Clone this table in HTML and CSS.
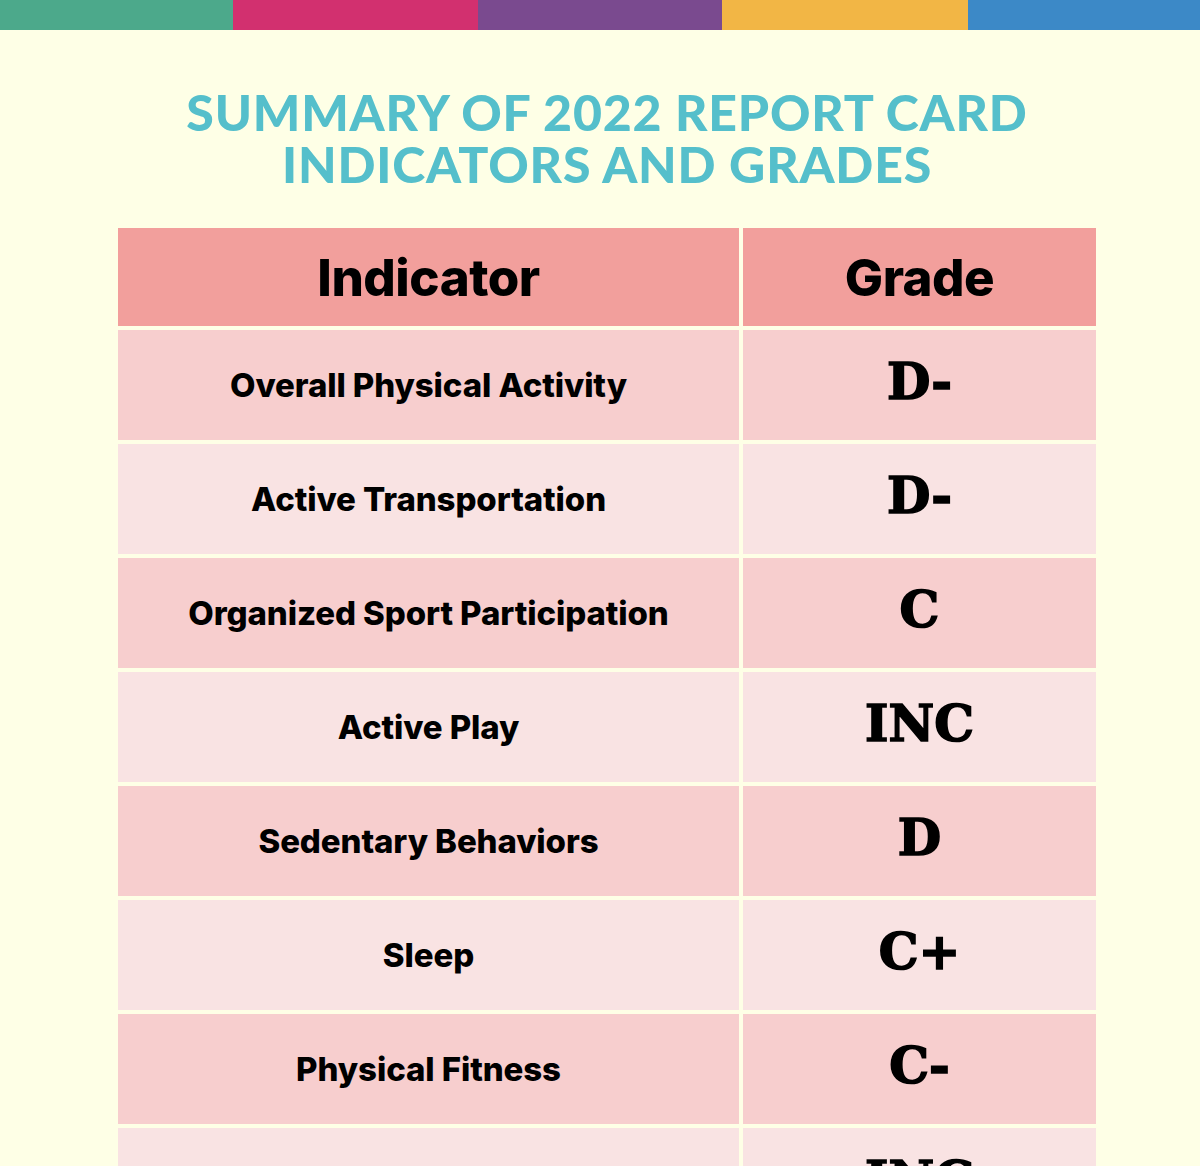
FILE: index.html
```html
<!DOCTYPE html>
<html lang="en">
<head>
<meta charset="utf-8">
<title>Summary of 2022 Report Card</title>
<link rel="stylesheet" href="styles.css">
</head>
<body>
<div class="topbar">
  <div class="seg seg-green"></div>
  <div class="seg seg-pink"></div>
  <div class="seg seg-purple"></div>
  <div class="seg seg-yellow"></div>
  <div class="seg seg-blue"></div>
</div>
<main class="page">
  <h1 class="title"><span class="line">SUMMARY OF 2022 REPORT CARD</span><span class="line">INDICATORS AND GRADES</span></h1>
  <div class="grid">
    <div class="cell head">Indicator</div>
    <div class="cell head">Grade</div>

    <div class="cell ind odd">Overall Physical Activity</div>
    <div class="cell grade odd">D-</div>

    <div class="cell ind even">Active Transportation</div>
    <div class="cell grade even">D-</div>

    <div class="cell ind odd">Organized Sport Participation</div>
    <div class="cell grade odd">C</div>

    <div class="cell ind even">Active Play</div>
    <div class="cell grade even">INC</div>

    <div class="cell ind odd">Sedentary Behaviors</div>
    <div class="cell grade odd">D</div>

    <div class="cell ind even">Sleep</div>
    <div class="cell grade even">C+</div>

    <div class="cell ind odd">Physical Fitness</div>
    <div class="cell grade odd">C-</div>

    <div class="cell ind even">Family and Peers</div>
    <div class="cell grade even">INC</div>
  </div>
</main>
</body>
</html>
```

FILE: styles.css
```css
html, body {
  margin: 0;
  padding: 0;
  background: #FEFFE6;
}
body {
  font-family: "Inter", "Liberation Sans", sans-serif;
  color: #000;
}
.topbar {
  display: flex;
  height: 30px;
}
.seg { height: 100%; }
.seg-green { width: 233px; background: #4CA98B; }
.seg-pink { width: 245px; background: #D2306F; }
.seg-purple { width: 244px; background: #7A4A8F; }
.seg-yellow { width: 246px; background: #F2B645; }
.seg-blue { flex: 1; background: #3C89C7; }

.page {
  width: 978px;
  margin-left: 118px;
}
.title {
  margin: 0;
  padding-top: 56px;
  text-align: center;
  font-family: "Lato", "DejaVu Sans", sans-serif;
  font-weight: 900;
  font-size: 50px;
  line-height: 52px;
  color: #55BFCB;
  letter-spacing: 0.8px;
}
.line {
  display: block;
  height: 52px;
}
.grid {
  margin-top: 38px;
  display: grid;
  grid-template-columns: 621px 353px;
  grid-auto-rows: 110px;
  grid-template-rows: 98px;
  column-gap: 4px;
  row-gap: 4px;
}
.cell {
  display: flex;
  align-items: center;
  justify-content: center;
}
.head {
  background: #F29F9C;
  font-weight: 800;
  font-size: 51px;
  letter-spacing: -0.5px;
}
.odd { background: #F7CECE; }
.even { background: #F9E3E3; }
.ind {
  font-weight: 800;
  font-size: 33px;
  letter-spacing: -0.1px;
}
.grade {
  font-family: "DejaVu Serif", "Liberation Serif", serif;
  font-weight: 700;
  font-size: 50px;
  -webkit-text-stroke: 1.6px #000;
  padding-bottom: 8px;
  box-sizing: border-box;
}
```
